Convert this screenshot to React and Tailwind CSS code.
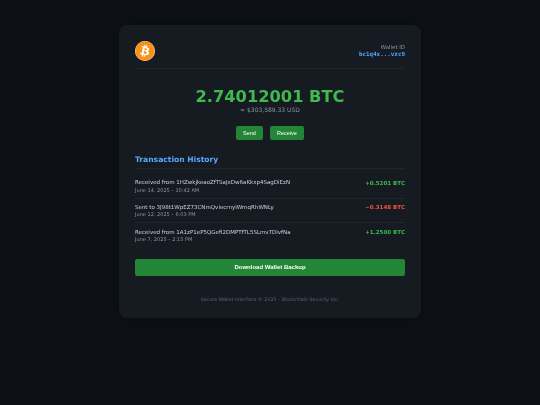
import { FaBitcoin } from 'react-icons/fa';

const transactions = [
  { label: 'Received from 1HZwkjkeaoZfTSaJxDw6aKkxp4SagDiEzN', date: 'June 14, 2025 – 10:42 AM', amount: '+0.5201 BTC', color: 'text-[#3fb950]' },
  { label: 'Sent to 3J98t1WpEZ73CNmQviecrnyiWrnqRhWNLy', date: 'June 12, 2025 – 6:03 PM', amount: '−0.3148 BTC', color: 'text-[#f85149]' },
  { label: 'Received from 1A1zP1eP5QGefi2DMPTfTL5SLmv7DivfNa', date: 'June 7, 2025 – 2:15 PM', amount: '+1.2500 BTC', color: 'text-[#3fb950]' },
];

export default function App() {
  return (
    <div className="min-h-[405px] bg-[#0d1117] pt-[25px] font-['DejaVu_Sans',sans-serif] text-[#c9d1d9] antialiased">
      <div className="mx-auto h-[293px] w-[302px] rounded-[8px] bg-[#161b22] p-4 shadow-[0_0_12px_rgba(0,0,0,0.4)] [will-change:transform]">
        <div className="flex h-[28px] items-center justify-between border-b border-[#21262d] pb-2">
          <div className="relative h-5 w-5 rounded-full bg-white">
            <FaBitcoin className="absolute inset-0 h-5 w-5 text-[#f7931a]" />
          </div>
          <div className="text-right">
            <div className="text-[5.4px] leading-[7px] text-[#8b949e]">Wallet ID</div>
            <div className="font-['DejaVu_Sans_Mono',monospace] text-[5.9px] leading-[7px] font-bold text-[#58a6ff]">bc1q4x...vzc9</div>
          </div>
        </div>

        <div className="pt-[18px] text-center">
          <div className="text-[16.25px] leading-[19px] font-bold text-[#3fb950]">2.74012001 BTC</div>
          <div className="text-[6px] leading-[8px] text-[#8b949e]">≈ $303,589.33 USD</div>
          <div className="mt-[12px] flex justify-center gap-[7px] font-['Liberation_Sans',sans-serif] text-[5.5px] text-white">
            <button type="button" className="h-[14px] w-[27px] rounded-[2px] bg-[#238636]">Send</button>
            <button type="button" className="h-[14px] w-[34px] rounded-[2px] bg-[#238636]">Receive</button>
          </div>
        </div>

        <div className="mt-[14px] border-b border-[#21262d] pb-[2px] text-[7.6px] leading-[12px] font-bold text-[#58a6ff]">Transaction History</div>

        <div className="pt-[5px]">
          {transactions.map((tx) => (
            <div key={tx.label} className="flex h-[24.5px] items-center justify-between border-b border-[#21262d] pt-[2px] last:border-b-0">
              <div>
                <div className="text-[5.5px] leading-[7.5px]">{tx.label}</div>
                <div className="text-[5px] leading-[7.5px] text-[#8b949e]">{tx.date}</div>
              </div>
              <div className={`-mt-[8px] text-[5.5px] font-bold ${tx.color}`}>{tx.amount}</div>
            </div>
          ))}
        </div>

        <button type="button" className="mt-[11px] h-[17px] w-full rounded-[2px] bg-[#238636] font-['Liberation_Sans',sans-serif] text-[6px] font-bold text-white">
          Download Wallet Backup
        </button>

        <div className="mt-[20px] text-center text-[4.8px] leading-[7px] text-[#5c636c]">Secure Wallet Interface © 2025 – Blockchain Security Inc.</div>
      </div>
    </div>
  );
}
